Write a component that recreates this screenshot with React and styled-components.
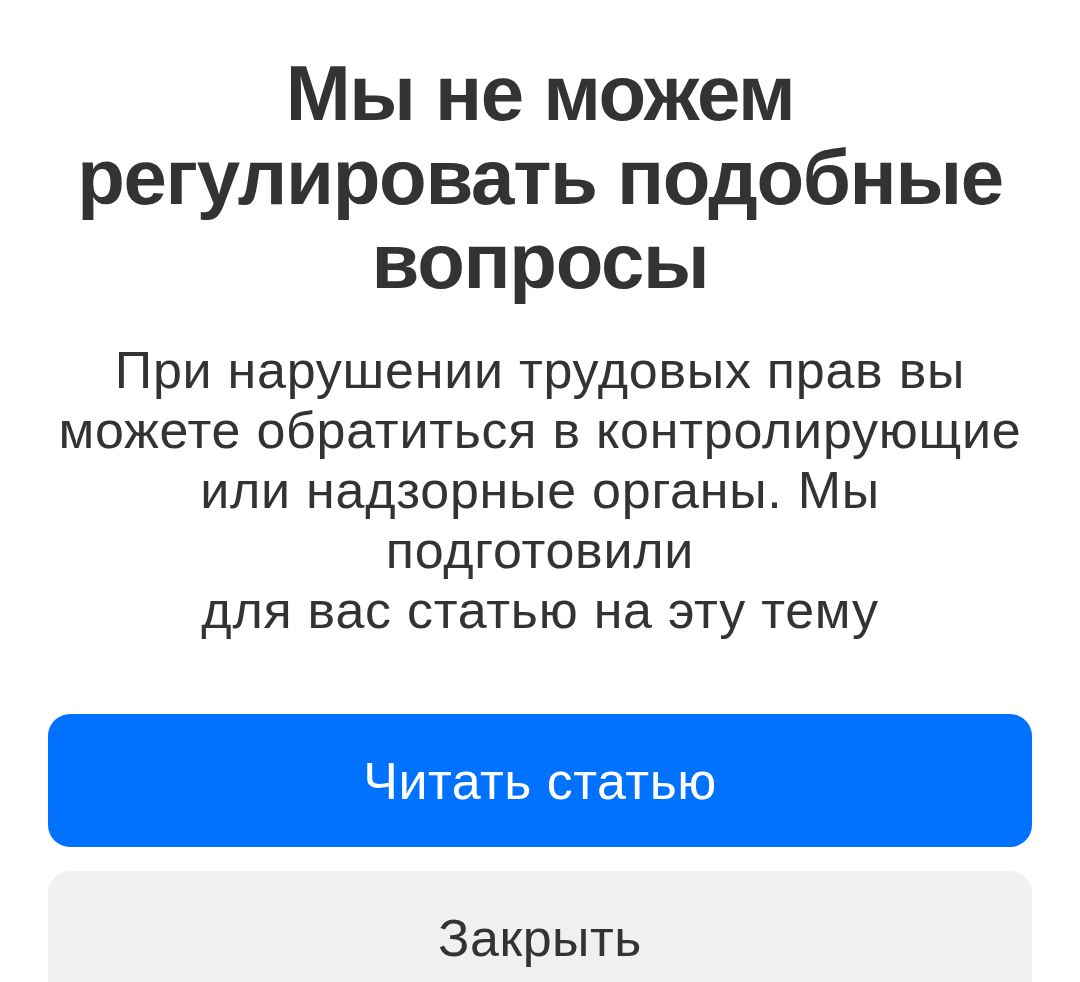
import React from "react";
import styled, { createGlobalStyle } from "styled-components";

const GlobalStyle = createGlobalStyle`
  html, body {
    margin: 0;
    padding: 0;
    background: #ffffff;
  }
  body {
    font-family: "Liberation Sans", Arial, sans-serif;
    color: #333333;
    -webkit-font-smoothing: antialiased;
  }
`;

const Sheet = styled.div`
  display: flex;
  flex-direction: column;
  align-items: stretch;
  padding: 51px 48px 0;
  min-height: 982px;
  box-sizing: border-box;
  overflow: hidden;
`;

const Title = styled.h1`
  margin: 0;
  font-size: 78px;
  line-height: 84px;
  font-weight: 700;
  letter-spacing: -1.3px;
  text-align: center;
  color: #333333;
`;

const Message = styled.p`
  margin: 37px 0 0;
  font-size: 52px;
  line-height: 60px;
  font-weight: 400;
  letter-spacing: 0.75px;
  text-align: center;
  color: #333333;
`;

const Actions = styled.div`
  display: flex;
  flex-direction: column;
  gap: 24px;
  margin-top: 74px;
`;

const ActionButton = styled.button`
  display: flex;
  align-items: center;
  justify-content: center;
  height: 133px;
  border: none;
  border-radius: 22px;
  font-family: "Liberation Sans", Arial, sans-serif;
  font-size: 52px;
  font-weight: 400;
  letter-spacing: 0.5px;
  cursor: pointer;
  background: ${(p) => (p.$primary ? "#0072ff" : "#f0f0f0")};
  color: ${(p) => (p.$primary ? "#ffffff" : "#333333")};
`;

export default function App() {
  return (
    <>
      <GlobalStyle />
      <Sheet>
        <Title>
          Мы не можем
          <br />
          регулировать подобные
          <br />
          вопросы
        </Title>
        <Message>
          При нарушении трудовых прав вы
          <br />
          можете обратиться в контролирующие
          <br />
          или надзорные органы. Мы
          <br />
          подготовили
          <br />
          для вас статью на эту тему
        </Message>
        <Actions>
          <ActionButton $primary>Читать статью</ActionButton>
          <ActionButton>Закрыть</ActionButton>
        </Actions>
      </Sheet>
    </>
  );
}
